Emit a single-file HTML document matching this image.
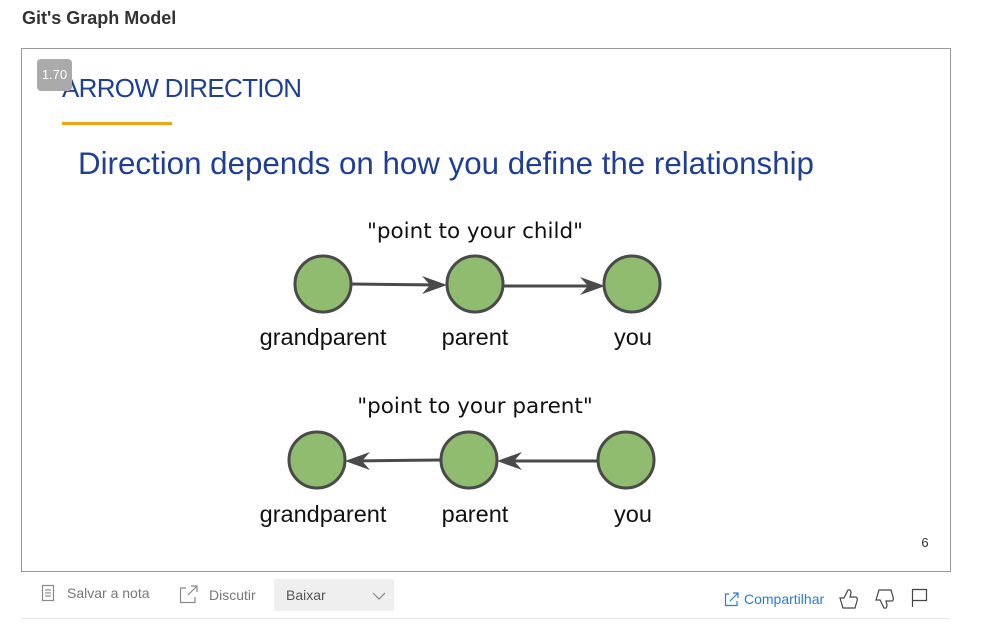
<!DOCTYPE html>
<html><head><meta charset="utf-8"><style>
body{margin:0;width:1007px;height:626px;background:#fff;font-family:"Liberation Sans",sans-serif;position:relative;overflow:hidden}
.t{position:absolute;left:22px;top:8px;font-size:18px;font-weight:bold;color:#333}
.box{position:absolute;left:21px;top:48px;width:928px;height:522px;border:1px solid #999}
.badge{position:absolute;left:37px;top:59px;width:35px;height:32px;background:#aaa;border-radius:4px;color:#fff;font-size:13px;line-height:32px;text-align:center}
.bar{position:absolute;top:578px;font-size:14px;color:#777}
</style></head><body>
<div class="t">Git's Graph Model</div>
<div class="box"></div>
<div style="position:absolute;left:274px;top:579px;width:120px;height:32px;background:#efefef;border-radius:2px;font-size:14px;color:#555;line-height:32px;padding-left:12px;box-sizing:border-box">Baixar</div>
<svg style="position:absolute;left:0;top:0" width="1007" height="626">
<text x="62" y="97" font-family="Liberation Sans" font-size="26" fill="#1f3f94" letter-spacing="-0.7">ARROW DIRECTION</text>
<rect x="62" y="122" width="110" height="3" fill="#f0a515"/>
<text x="78" y="174" font-family="Liberation Sans" font-size="31.3" fill="#1f3f94">Direction depends on how you define the relationship</text>
<text x="475" y="238" text-anchor="middle" font-family="DejaVu Sans" font-size="21.5" fill="#111">"point to your child"</text>
<text x="475" y="413" text-anchor="middle" font-family="DejaVu Sans" font-size="21.5" fill="#111">"point to your parent"</text>
<g stroke="#4a4a4a" stroke-width="3" fill="none">
<line x1="351" y1="284" x2="440" y2="285"/><line x1="503" y1="286" x2="598" y2="286"/>
<line x1="441" y1="460" x2="352" y2="461"/><line x1="598" y1="461" x2="504" y2="461"/>
</g>
<g fill="#4a4a4a">
<path d="M447 285 L422 276 L430 285 L422 294Z"/><path d="M605 286 L580 277 L588 286 L580 295Z"/>
<path d="M345 461 L370 452 L362 461 L370 470Z"/><path d="M497 461 L522 452 L514 461 L522 470Z"/>
</g>
<g fill="#8fbc6f" stroke="#4a4a4a" stroke-width="3">
<circle cx="323" cy="284" r="28"/><circle cx="475" cy="284" r="28"/><circle cx="632" cy="284" r="28"/>
<circle cx="317" cy="460" r="28"/><circle cx="469" cy="460" r="28"/><circle cx="626" cy="460" r="28"/>
</g>
<g font-family="Liberation Sans" font-size="23.5" fill="#111" text-anchor="middle">
<text x="323" y="345">grandparent</text><text x="475" y="345">parent</text><text x="633" y="345">you</text>
<text x="323" y="522">grandparent</text><text x="475" y="522">parent</text><text x="633" y="522">you</text>
</g>
<text x="925" y="547" font-family="Liberation Sans" font-size="13" fill="#333" text-anchor="middle">6</text>
<g stroke="#888" stroke-width="1.2" fill="none">
<rect x="42.5" y="585.5" width="11" height="15"/><line x1="45" y1="590" x2="51" y2="590"/><line x1="45" y1="593" x2="51" y2="593"/><line x1="45" y1="596" x2="51" y2="596"/>
<path d="M186 588 H180.5 V602.5 H195 V597"/><path d="M188 595 L197 586 M191 586 H197 V592"/>
<path d="M373 593 L379 599 L385 593"/>
</g>
<g stroke="#2a7ad9" stroke-width="1.2" fill="none"><path d="M729 594 H725.5 V605.5 H737 V601"/><path d="M730 601 L738 593 M733 593 H738 V598"/></g>
<g stroke="#444" stroke-width="1.2" fill="none">
<path d="M840 598 H844 L848 590 Q851 589 851 593 L850 597 H856 Q858 598 857 601 L855 608 H843 Z"/>
<path d="M876 600 H880 L884 608 Q887 609 887 605 L886 601 H892 Q894 600 893 597 L891 590 H879 Z"/>
<path d="M912.5 607 V589.5 H926.5 V600.5 H912.5"/>
</g>
</svg>
<div class="badge">1.70</div>
<div class="bar" style="left:67px;top:585px">Salvar a nota</div>
<div class="bar" style="left:209px;top:587px">Discutir</div>
<div class="bar" style="left:744px;top:591px;color:#2a7ad9">Compartilhar</div>
<div style="position:absolute;left:21px;top:618px;width:929px;height:1px;background:#e3e3e3"></div>
</body></html>
